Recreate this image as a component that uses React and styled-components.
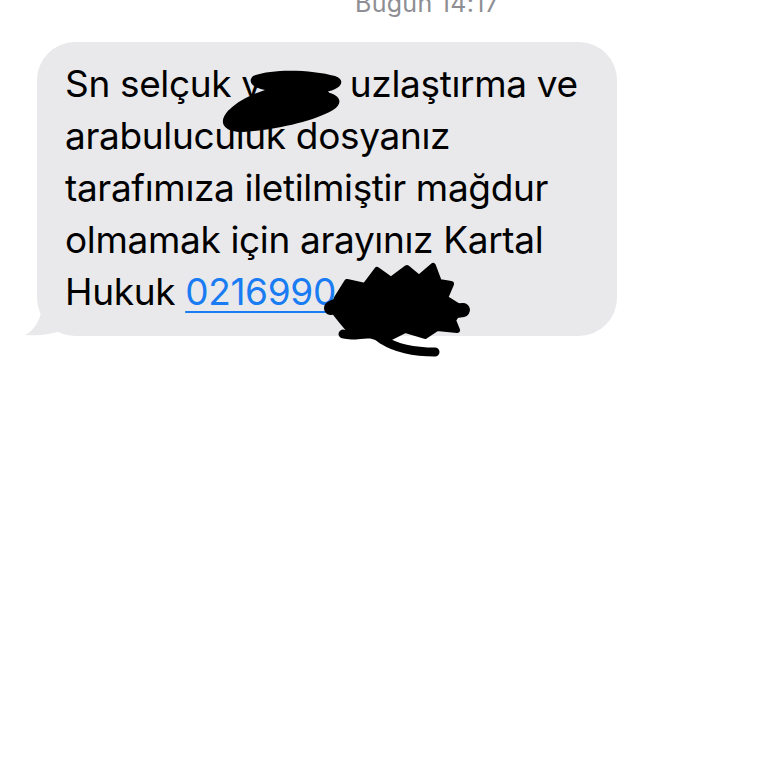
import React from 'react';
import styled, { createGlobalStyle } from 'styled-components';

const GlobalStyle = createGlobalStyle`
  html, body {
    margin: 0;
    padding: 0;
    background: #ffffff;
    overflow: hidden;
  }
  body {
    font-family: Inter, "Noto Sans", "Liberation Sans", sans-serif;
  }
`;

const Page = styled.div`
  width: 768px;
  height: 768px;
  background: #ffffff;
  overflow: hidden;
`;

const Timestamp = styled.div`
  margin-top: -12px;
  padding-left: 355px;
  font-size: 25px;
  line-height: 30px;
  color: #8e8e93;
  letter-spacing: 0.3px;
`;

const Thread = styled.div`
  padding: 24px 0 0 37px;
`;

const Bubble = styled.div`
  position: relative;
  width: 580px;
  box-sizing: border-box;
  padding: 16px 20px 18px 28px;
  background: #e9e9eb;
  border-radius: 38px;
  color: #000000;
  font-size: 37px;
  line-height: 52px;
  letter-spacing: -0.35px;
`;

const Line = styled.div`
  white-space: nowrap;
`;

const Hidden = styled.span`
  display: inline-block;
  width: ${p => p.$w}px;
`;

const PhoneLink = styled.a`
  color: #1a7cf3;
  text-decoration: underline;
  text-decoration-thickness: 2px;
  text-underline-offset: 6px;
`;

const Tail = styled.svg`
  position: absolute;
  left: -14px;
  bottom: 0;
`;

const Scribble = styled.svg`
  position: absolute;
  left: ${p => p.$x}px;
  top: ${p => p.$y}px;
  overflow: visible;
  pointer-events: none;
`;

export default function App() {
  return (
    <Page>
      <GlobalStyle />
      <Timestamp>Bugün 14:17</Timestamp>
      <Thread>
        <Bubble>
          <Tail width="40" height="40" viewBox="0 0 40 40">
            <path d="M40 0 L40 34 C30 38 18 40 2 39 C12 34 20 22 20 0 Z" fill="#e9e9eb" />
          </Tail>
          <Line>Sn selçuk y<Hidden $w={78} /> uzlaştırma ve</Line>
          <Line>arabuluculuk dosyanız</Line>
          <Line>tarafımıza iletilmiştir mağdur</Line>
          <Line>olmamak için arayınız Kartal</Line>
          <Line>
            Hukuk <PhoneLink>0216990</PhoneLink>
          </Line>
          <Scribble $x={176} $y={24} width="140" height="70" viewBox="0 0 140 70">
            <path
              d="M40 10 C60 2 100 4 122 10 C134 14 128 24 112 26 C126 28 132 36 120 44 C100 56 60 64 30 66 C10 66 4 56 16 44 C26 34 40 28 52 24 C40 22 34 16 40 10 Z"
              fill="#000"
            />
            <path d="M20 50 C50 40 80 38 110 30" stroke="#000" strokeWidth="14" strokeLinecap="round" fill="none" />
          </Scribble>
          <Scribble $x={292} $y={222} width="140" height="90" viewBox="0 0 140 90">
            <path
              d="M8 34 L18 18 L36 22 L48 6 L62 16 L78 4 L90 14 L104 2 L110 18 L122 20 L116 34 L132 44 L124 56 L128 66 L108 64 L96 72 L76 66 L60 74 L40 66 L22 68 L12 56 L4 46 Z"
              fill="#000"
              stroke="#000"
              strokeWidth="6"
              strokeLinejoin="round"
            />
            <path d="M14 70 C30 74 40 64 54 76 C70 86 90 88 106 88" stroke="#000" strokeWidth="9" strokeLinecap="round" fill="none" />
            <path d="M2 44 C20 34 40 52 60 42 C80 32 100 52 134 46" stroke="#000" strokeWidth="14" strokeLinecap="round" fill="none" />
          </Scribble>
        </Bubble>
      </Thread>
    </Page>
  );
}
